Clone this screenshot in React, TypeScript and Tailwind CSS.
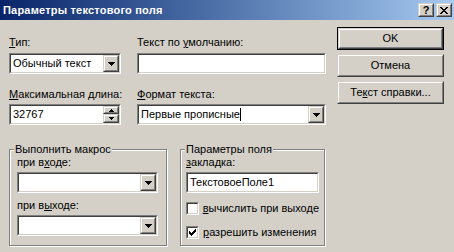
import React from "react";

const FONT = { fontFamily: '"Liberation Sans", Arial, sans-serif' };

function U({ children }: { children: React.ReactNode }) {
  return <span className="underline underline-offset-[1px] decoration-[1px]">{children}</span>;
}

function Sunken({ className = "", children }: { className?: string; children?: React.ReactNode }) {
  return (
    <div className={`border border-t-[#808080] border-l-[#808080] border-b-white border-r-white ${className}`}>
      <div className="h-full border border-t-[#404040] border-l-[#404040] border-b-[#D4D0C8] border-r-[#D4D0C8] bg-white flex items-center">
        {children}
      </div>
    </div>
  );
}

function Raised({ className = "", children }: { className?: string; children?: React.ReactNode }) {
  return (
    <div className={`border border-t-[#D4D0C8] border-l-[#D4D0C8] border-b-[#404040] border-r-[#404040] ${className}`}>
      <div className="h-full w-full border border-t-white border-l-white border-b-[#808080] border-r-[#808080] bg-[#D4D0C8] flex items-center justify-center">
        {children}
      </div>
    </div>
  );
}

function DownTri() {
  return (
    <svg width="7" height="4" viewBox="0 0 7 4" shapeRendering="crispEdges">
      <path d="M0 0h7v1H0zM1 1h5v1H1zM2 2h3v1H2zM3 3h1v1H3z" fill="#000" />
    </svg>
  );
}

function SmallTri({ up }: { up?: boolean }) {
  return (
    <svg width="5" height="3" viewBox="0 0 5 3" shapeRendering="crispEdges">
      {up ? (
        <path d="M2 0h1v1H2zM1 1h3v1H1zM0 2h5v1H0z" fill="#000" />
      ) : (
        <path d="M0 0h5v1H0zM1 1h3v1H1zM2 2h1v1H2z" fill="#000" />
      )}
    </svg>
  );
}

function Combo({ text, className = "" }: { text?: React.ReactNode; className?: string }) {
  return (
    <Sunken className={`h-[21px] ${className}`}>
      <div className="flex-1 pl-[2px] text-[11px] leading-[13px] text-black whitespace-nowrap overflow-hidden">{text}</div>
      <Raised className="w-[16px] h-[17px]">
        <DownTri />
      </Raised>
    </Sunken>
  );
}

function Label({ children, className = "" }: { children: React.ReactNode; className?: string }) {
  return <div className={`text-[11px] leading-[13px] text-black whitespace-nowrap ${className}`}>{children}</div>;
}

function CheckBox({ checked }: { checked?: boolean }) {
  return (
    <Sunken className="w-[13px] h-[13px]">
      {checked && (
        <svg width="7" height="7" viewBox="0 0 7 7" className="ml-[1px]" shapeRendering="crispEdges">
          <path d="M6 0h1v3H6zM5 1h1v3H5zM4 2h1v3H4zM3 3h1v3H3zM2 4h1v3H2zM1 3h1v3H1zM0 2h1v3H0z" fill="#000" />
        </svg>
      )}
    </Sunken>
  );
}

function Group({ title, className = "", children }: { title: string; className?: string; children: React.ReactNode }) {
  return (
    <div className={`relative border border-[#808080] shadow-[inset_1px_1px_0_#fff,1px_1px_0_#fff] ${className}`}>
      <div className="absolute -top-[7px] left-[4px] px-[1px] bg-[#D4D0C8] text-[11px] leading-[13px] text-black whitespace-nowrap">
        {title}
      </div>
      {children}
    </div>
  );
}

function Btn({ children, def }: { children: React.ReactNode; def?: boolean }) {
  const inner = (
    <Raised className="w-full h-full">
      <span className="text-[11px] leading-[13px] text-black">{children}</span>
    </Raised>
  );
  if (def) {
    return <div className="h-[23px] border border-black">{inner}</div>;
  }
  return <div className="h-[23px]">{inner}</div>;
}

export default function App() {
  return (
    <div className="w-[454px] h-[252px] bg-[#D4D0C8] overflow-hidden flex flex-col" style={FONT}>
      <div className="h-[20px] flex items-center bg-gradient-to-r from-[#0A246A] to-[#A6CAF0] pl-[3px] pr-[2px]">
        <div className="flex-1 text-white font-bold text-[11px] leading-[13px] tracking-[0.2px] whitespace-nowrap">
          Параметры текстового поля
        </div>
        <Raised className="w-[16px] h-[14px]">
          <span className="text-[11px] font-bold leading-[11px] text-black">?</span>
        </Raised>
        <Raised className="w-[16px] h-[14px] ml-[2px]">
          <svg width="8" height="7" viewBox="0 0 8 7" shapeRendering="crispEdges">
            <path d="M0 0h2v1H0zM6 0h2v1H6zM1 1h2v1H1zM5 1h2v1H5zM2 2h4v1H2zM3 3h2v1H3zM2 4h4v1H2zM1 5h2v1H1zM5 5h2v1H5zM0 6h2v1H0zM6 6h2v1H6z" fill="#000" />
          </svg>
        </Raised>
      </div>
      <div className="flex pl-[9px] pt-[7px]">
        <div className="w-[317px] flex flex-col">
          <div className="flex gap-[16px] mt-[9px]">
            <div className="w-[112px] flex flex-col">
              <Label><U>Т</U>ип:</Label>
              <Combo className="mt-[4px]" text="Обычный текст" />
            </div>
            <div className="w-[189px] flex flex-col">
              <Label>Текст по <U>у</U>молчанию:</Label>
              <Sunken className="mt-[4px] h-[21px]" />
            </div>
          </div>
          <div className="flex gap-[16px] mt-[14px]">
            <div className="w-[112px] flex flex-col">
              <Label><U>М</U>аксимальная длина:</Label>
              <Sunken className="mt-[3px] h-[21px]">
                <div className="flex-1 pl-[2px] text-[11px] leading-[13px] text-black">32767</div>
                <div className="flex flex-col h-[17px]">
                  <Raised className="w-[16px] h-[8px]"><SmallTri up /></Raised>
                  <Raised className="w-[16px] h-[9px]"><SmallTri /></Raised>
                </div>
              </Sunken>
            </div>
            <div className="w-[189px] flex flex-col">
              <Label><U>Ф</U>ормат текста:</Label>
              <Combo
                className="mt-[3px]"
                text={
                  <span className="inline-flex items-center">
                    Первые прописные<span className="inline-block w-[1px] h-[13px] bg-black" />
                  </span>
                }
              />
            </div>
          </div>
          <div className="flex mt-[24px] gap-[13px]">
            <Group title="Выполнить макрос" className="w-[158px] h-[97px]">
              <div className="flex flex-col pl-[7px] pr-[8px] pt-[6px]">
                <Label>при в<U>х</U>оде:</Label>
                <Combo className="mt-[3px]" />
                <Label className="mt-[6px]">при в<U>ы</U>ходе:</Label>
                <Combo className="mt-[3px]" />
              </div>
            </Group>
            <Group title="Параметры поля" className="w-[145px] h-[97px]">
              <div className="flex flex-col pl-[5px] pr-[5px] pt-[6px]">
                <Label><U>з</U>акладка:</Label>
                <Sunken className="mt-[3px] h-[21px]">
                  <div className="pl-[2px] text-[11px] leading-[13px] text-black">ТекстовоеПоле1</div>
                </Sunken>
                <div className="flex items-center mt-[9px]">
                  <CheckBox />
                  <Label className="ml-[4px]"><U>в</U>ычислить при выходе</Label>
                </div>
                <div className="flex items-center mt-[11px]">
                  <CheckBox checked />
                  <Label className="ml-[4px]"><U>р</U>азрешить изменения</Label>
                </div>
              </div>
            </Group>
          </div>
        </div>
        <div className="ml-[11px] w-[107px] flex flex-col gap-[4px]">
          <Btn def>OK</Btn>
          <Btn>Отмена</Btn>
          <Btn>Те<U>к</U>ст справки...</Btn>
        </div>
      </div>
    </div>
  );
}
